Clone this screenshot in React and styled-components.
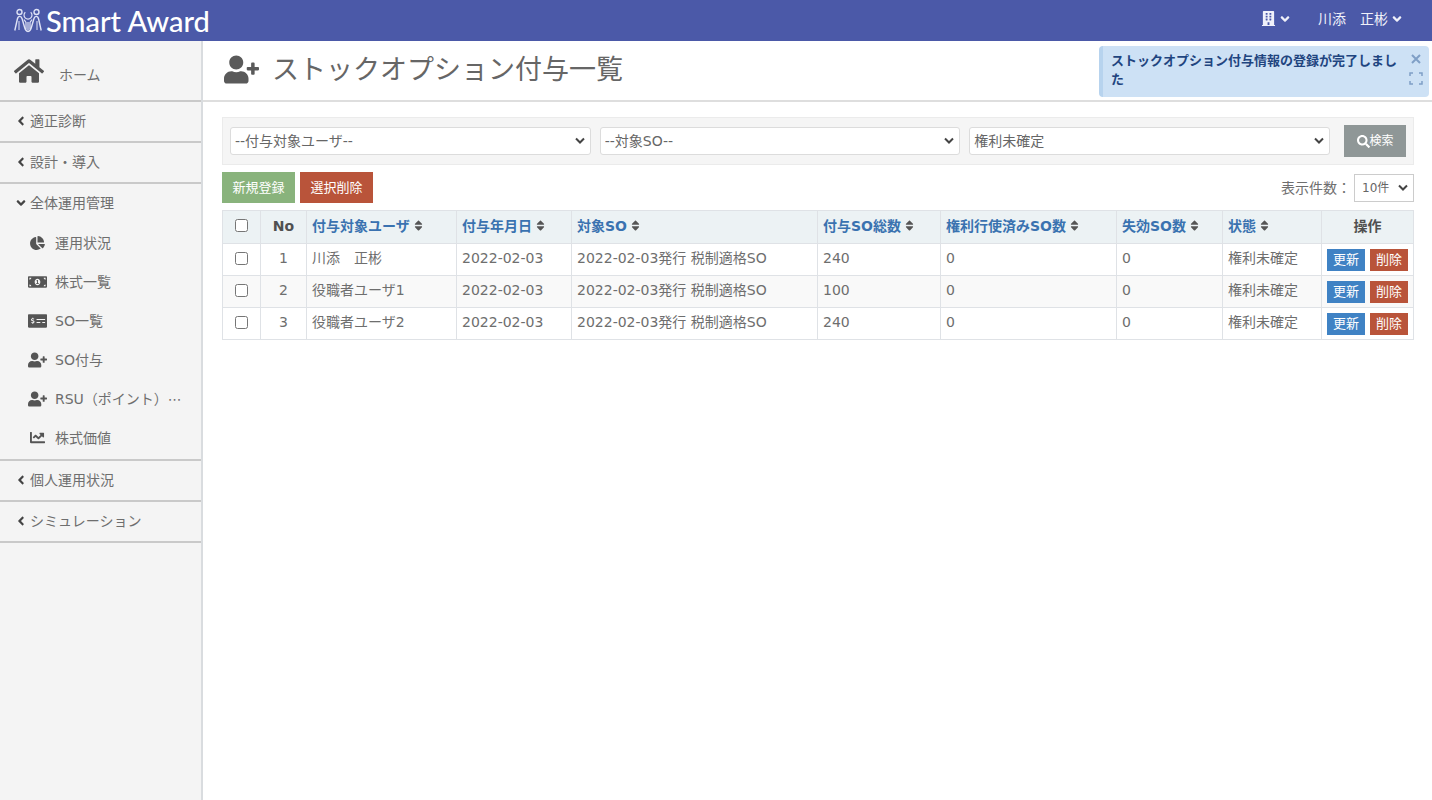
import React from "react";
import styled, { createGlobalStyle, css } from "styled-components";
import {
  FaHome,
  FaUserPlus,
  FaAngleLeft,
  FaAngleDown,
  FaChartPie,
  FaMoneyBillAlt,
  FaMoneyCheckAlt,
  FaChartLine,
  FaBuilding,
  FaSearch,
  FaSort,
} from "react-icons/fa";

const Global = createGlobalStyle`
  * { box-sizing: border-box; }
  body {
    margin: 0;
    background: #fff;
    color: #6e6e6e;
    font-family: "DejaVu Sans", "Noto Sans CJK JP", sans-serif;
    font-size: 14px;
    line-height: 20px;
  }
  button, select, input { font: inherit; margin: 0; }
  a { color: inherit; text-decoration: none; }
`;

const Page = styled.div`
  display: flex;
  flex-direction: column;
  min-height: 100vh;
`;

const TopBar = styled.header`
  display: flex;
  align-items: center;
  justify-content: space-between;
  height: 41px;
  padding: 0 28px 0 14px;
  background: #4b59a8;
  color: #fff;
`;

const Brand = styled.a`
  display: flex;
  align-items: center;
  gap: 4px;
  font-family: Lato, sans-serif;
  font-size: 29px;
  line-height: 40px;
  font-weight: 500;
`;

const TopMenu = styled.nav`
  display: flex;
  align-items: center;
  gap: 26px;
  padding-bottom: 4px;
`;

const TopButton = styled.button`
  display: flex;
  align-items: center;
  gap: 2px;
  padding: 0;
  border: 0;
  background: none;
  color: #f0f1fa;
  line-height: 20px;
`;

const Body = styled.div`
  display: flex;
  flex: 1;
`;

const Sidebar = styled.nav`
  flex: none;
  width: 203px;
  background: #f4f4f4;
  border-right: 2px solid #d9dcdf;
`;

const HomeLink = styled.a`
  display: flex;
  align-items: center;
  gap: 15px;
  height: 61px;
  padding: 0 14px;
  border-bottom: 2px solid #c9c9c9;
  svg { color: #555; }
  span { padding-top: 8px; }
`;

const Section = styled.section`
  border-bottom: 2px solid #c9c9c9;
`;

const SectionButton = styled.button`
  display: flex;
  align-items: center;
  gap: 2px;
  width: 100%;
  height: 39px;
  padding: 0 14px 2px;
  border: 0;
  background: none;
  color: #6e6e6e;
  text-align: left;
  svg { color: #444; }
`;

const SubList = styled.ul`
  margin: 0;
  padding: 0 0 2px;
  list-style: none;
`;

const SubLink = styled.a`
  display: flex;
  align-items: center;
  gap: 8px;
  height: 39px;
  padding-left: 28px;
  white-space: nowrap;
  svg { flex: none; width: 19px; color: #555; }
`;

const Main = styled.main`
  position: relative;
  flex: 1;
  min-width: 0;
`;

const TitleBar = styled.div`
  display: flex;
  align-items: center;
  gap: 13px;
  height: 61px;
  padding: 0 21px 2px;
  border-bottom: 2px solid #dedede;
  svg { color: #5a5a5a; }
`;

const Title = styled.h1`
  margin: 0;
  font-size: 27px;
  line-height: 40px;
  font-weight: 400;
  color: #666;
`;

const Toast = styled.div`
  position: absolute;
  top: 5px;
  right: 3px;
  display: flex;
  justify-content: space-between;
  width: 330px;
  min-height: 51px;
  padding: 5px 6px 5px 8px;
  border-left: 4px solid #b7d3ee;
  border-radius: 4px;
  background: #cde1f5;
  color: #1f4580;
  font-size: 13px;
  line-height: 19px;
  font-weight: 700;
  p { margin: 0; width: 292px; }
`;

const ToastTools = styled.div`
  display: flex;
  flex-direction: column;
  align-items: center;
  gap: 7px;
  padding-top: 2px;
`;

const IconButton = styled.button`
  display: block;
  padding: 0;
  border: 0;
  background: none;
  color: #7f9fc6;
  svg { display: block; }
`;

const Content = styled.div`
  padding: 15px 18px 20px 19px;
`;

const FilterBar = styled.form`
  display: flex;
  align-items: center;
  gap: 9px;
  height: 48px;
  padding: 0 7px;
  border: 1px solid #ebebeb;
  background: #f5f5f5;
`;

const SelectBox = styled.div`
  position: relative;
  flex: ${(p) => (p.$small ? "none" : "1")};
  width: ${(p) => (p.$small ? "60px" : "auto")};
  select {
    appearance: none;
    display: block;
    width: 100%;
    height: 28px;
    padding: 0 ${(p) => (p.$small ? "7px" : "4px")};
    border: 1px solid ${(p) => (p.$small ? "#ccc" : "#dcdcdc")};
    border-radius: ${(p) => (p.$small ? "0" : "3px")};
    background: #fff;
    color: #666;
    font-size: ${(p) => (p.$small ? "12px" : "14px")};
  }
  svg {
    position: absolute;
    right: 5px;
    top: 9px;
    pointer-events: none;
  }
`;

const tones = {
  green: "#89b37c",
  red: "#b9543a",
  blue: "#3f82c4",
  gray: "#8f9797",
};

const Button = styled.button`
  display: inline-flex;
  align-items: center;
  justify-content: center;
  height: 31px;
  width: 73px;
  padding: 0;
  border: 0;
  background: ${(p) => tones[p.$tone]};
  color: #fff;
  font-size: 13px;
  line-height: 20px;
  ${(p) =>
    p.$search &&
    css`
      width: 62px;
      height: 32px;
      margin-left: 5px;
      font-size: 12px;
    `}
  ${(p) =>
    p.$mini &&
    css`
      width: 38px;
      height: 22px;
    `}
`;

const Tools = styled.div`
  display: flex;
  align-items: center;
  gap: 5px;
  padding: 7px 0;
`;

const PageSize = styled.div`
  display: flex;
  align-items: center;
  gap: 3px;
  margin-left: auto;
`;

const Table = styled.table`
  width: 100%;
  table-layout: fixed;
  border-collapse: collapse;
  th, td {
    height: 32px;
    padding: 0 5px 3px;
    border: 1px solid #dfe2e6;
    text-align: left;
    white-space: nowrap;
  }
  th {
    height: 33px;
    background: #ecf2f4;
    color: #505050;
    font-weight: 700;
  }
  tbody tr:nth-child(even) { background: #f9f9f9; }
  th.center, td.center { text-align: center; padding-left: 0; padding-right: 0; }
  td.ops { padding: 0; }
  input { display: block; width: 13px; height: 13px; margin: 0 auto; }
`;

const SortLink = styled.a`
  display: inline-flex;
  align-items: center;
  gap: 2px;
  color: #3a72b0;
  svg { color: #555; }
`;

const Ops = styled.div`
  display: flex;
  justify-content: center;
  gap: 5px;
`;

const LogoMark = () => (
  <svg width="28" height="26" viewBox="0 0 28 26" fill="none" stroke="#dfe3f6" strokeWidth="1.4" aria-hidden="true">
    <circle cx="5.5" cy="4" r="2.5" />
    <circle cx="22.5" cy="4" r="2.5" />
    <path d="M0.8 22.5 3.4 11q.6-2.6 2.4-2.6 1.600 0 2.300 2.400L10.500 19q1 4 3.500 4.500M27.200 22.500 24.600 11q-.6-2.600-2.400-2.600-1.600 0-2.300 2.400L17.500 19q-1 4-3.500 4.500" />
    <path d="M5 13v9M23 13v9" strokeWidth="1" />
    <path d="M11.300 4.200a4 4 0 1 0 5.400 0M10 11.500l2 3v7M18 11.500l-2 3v7M14 14v8" strokeWidth="1.200" />
  </svg>
);

const Chevron = () => (
  <svg width="12" height="10" viewBox="0 0 12 10" fill="none" stroke="#444" strokeWidth="2" aria-hidden="true">
    <path d="m2 2.500 4 4 4-4" />
  </svg>
);

const Select = ({ label, options, small, id }) => (
  <SelectBox $small={small}>
    <select id={id} aria-label={label}>
      {options.map((o) => (
        <option key={o}>{o}</option>
      ))}
    </select>
    <Chevron />
  </SelectBox>
);

const subItems = [
  ["運用状況", FaChartPie, 14],
  ["株式一覧", FaMoneyBillAlt, 18],
  ["SO一覧", FaMoneyCheckAlt, 18],
  ["SO付与", FaUserPlus, 18],
  ["RSU（ポイント）⋯", FaUserPlus, 18],
  ["株式価値", FaChartLine, 15],
];

const columns = [
  ["付与対象ユーザ", 150],
  ["付与年月日", 115],
  ["対象SO", null],
  ["付与SO総数", 123],
  ["権利行使済みSO数", 176],
  ["失効SO数", 106],
  ["状態", 99],
];

const rows = [
  ["川添　正彬", "2022-02-03", "2022-02-03発行 税制適格SO", 240, 0, 0, "権利未確定"],
  ["役職者ユーザ1", "2022-02-03", "2022-02-03発行 税制適格SO", 100, 0, 0, "権利未確定"],
  ["役職者ユーザ2", "2022-02-03", "2022-02-03発行 税制適格SO", 240, 0, 0, "権利未確定"],
];

const Group = ({ label, open, children }) => (
  <Section>
    <SectionButton type="button" aria-expanded={!!open}>
      {open ? <FaAngleDown size={14} /> : <FaAngleLeft size={14} />}
      {label}
    </SectionButton>
    {children}
  </Section>
);

export default function App() {
  return (
    <Page lang="ja">
      <Global />
      <TopBar>
        <Brand href="#">
          <LogoMark />
          Smart Award
        </Brand>
        <TopMenu>
          <TopButton type="button" aria-label="会社">
            <FaBuilding size={15} />
            <FaAngleDown size={14} />
          </TopButton>
          <TopButton type="button">
            川添　正彬
            <FaAngleDown size={14} />
          </TopButton>
        </TopMenu>
      </TopBar>
      <Body>
        <Sidebar>
          <HomeLink href="#">
            <FaHome size={30} />
            <span>ホーム</span>
          </HomeLink>
          <Group label="適正診断" />
          <Group label="設計・導入" />
          <Group label="全体運用管理" open>
            <SubList>
              {subItems.map(([label, Icon, size]) => (
                <li key={label}>
                  <SubLink href="#">
                    <Icon size={size} />
                    {label}
                  </SubLink>
                </li>
              ))}
            </SubList>
          </Group>
          <Group label="個人運用状況" />
          <Group label="シミュレーション" />
        </Sidebar>
        <Main>
          <TitleBar>
            <FaUserPlus size={35} />
            <Title>ストックオプション付与一覧</Title>
          </TitleBar>
          <Toast role="status">
            <p>ストックオプション付与情報の登録が完了しました</p>
            <ToastTools>
              <IconButton type="button" aria-label="閉じる">
                <svg width="12" height="12" viewBox="0 0 12 12" fill="none" stroke="currentColor" strokeWidth="2">
                  <path d="m2 2 8 8M10 2l-8 8" />
                </svg>
              </IconButton>
              <IconButton type="button" aria-label="拡大">
                <svg width="14" height="13" viewBox="0 0 14 13" fill="none" stroke="currentColor" strokeWidth="1.500">
                  <path d="M1 4V1h3M10 1h3v3M13 9v3h-3M4 12H1V9" />
                </svg>
              </IconButton>
            </ToastTools>
          </Toast>
          <Content>
            <FilterBar>
              <Select label="付与対象ユーザ" options={["--付与対象ユーザ--"]} />
              <Select label="対象SO" options={["--対象SO--"]} />
              <Select label="状態" options={["権利未確定"]} />
              <Button type="button" $tone="gray" $search>
                <FaSearch size={13} />
                検索
              </Button>
            </FilterBar>
            <Tools>
              <Button type="button" $tone="green">新規登録</Button>
              <Button type="button" $tone="red">選択削除</Button>
              <PageSize>
                <label htmlFor="page-size">表示件数：</label>
                <Select id="page-size" options={["10件"]} small />
              </PageSize>
            </Tools>
            <Table>
              <colgroup>
                <col width="38" />
                <col width="46" />
                {columns.map(([name, width]) => (
                  <col key={name} width={width || undefined} />
                ))}
                <col width="92" />
              </colgroup>
              <thead>
                <tr>
                  <th className="center">
                    <input type="checkbox" aria-label="すべて選択" />
                  </th>
                  <th className="center">No</th>
                  {columns.map(([name]) => (
                    <th key={name}>
                      <SortLink href="#">
                        {name}
                        <FaSort size={13} />
                      </SortLink>
                    </th>
                  ))}
                  <th className="center">操作</th>
                </tr>
              </thead>
              <tbody>
                {rows.map((row, i) => (
                  <tr key={row[0]}>
                    <td className="center">
                      <input type="checkbox" aria-label={row[0]} />
                    </td>
                    <td className="center">{i + 1}</td>
                    {row.map((cell, j) => (
                      <td key={columns[j][0]}>{cell}</td>
                    ))}
                    <td className="ops">
                      <Ops>
                        <Button type="button" $tone="blue" $mini>更新</Button>
                        <Button type="button" $tone="red" $mini>削除</Button>
                      </Ops>
                    </td>
                  </tr>
                ))}
              </tbody>
            </Table>
          </Content>
        </Main>
      </Body>
    </Page>
  );
}
